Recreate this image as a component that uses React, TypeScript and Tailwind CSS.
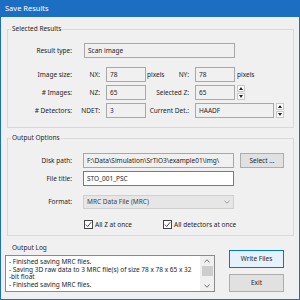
import React from "react";

const font = "font-['Noto_Sans',sans-serif]";

function Field({ w, children, white = false }: { w: string; children?: React.ReactNode; white?: boolean }) {
  return (
    <div
      className={`${w} h-[15px] border ${white ? "bg-white border-[#7a7a7a]" : "bg-[#f0f0f0] border-[#a8a8a8]"} flex items-center px-[3px] text-[#1e1e1e] whitespace-nowrap overflow-hidden`}
    >
      {children}
    </div>
  );
}

function Spin() {
  return (
    <div className="ml-[2px] w-[8px] h-[15px] flex flex-col gap-[1px]">
      <div className="h-[7px] bg-white border border-[#c8c8c8] flex items-center justify-center">
        <svg width="4" height="3" viewBox="0 0 4 3"><path d="M0 3 L2 0 L4 3 Z" fill="#222" /></svg>
      </div>
      <div className="h-[7px] bg-white border border-[#c8c8c8] flex items-center justify-center">
        <svg width="4" height="3" viewBox="0 0 4 3"><path d="M0 0 L2 3 L4 0 Z" fill="#222" /></svg>
      </div>
    </div>
  );
}

function Check() {
  return (
    <div className="w-[9px] h-[9px] border border-[#444] bg-white flex items-center justify-center">
      <svg width="7" height="7" viewBox="0 0 7 7">
        <path d="M0.8 3.6 L2.7 5.5 L6.2 1.2" stroke="#333" strokeWidth="0.9" fill="none" />
      </svg>
    </div>
  );
}

export default function App() {
  return (
    <div className={`w-[300px] h-[300px] bg-[#1b6ec2] px-[1px] pb-[1px] flex flex-col ${font} text-[6.5px] text-[#1e1e1e]`}>
      <div className="h-[17px] flex items-center pl-[4px] text-white text-[7.5px]">Save Results</div>
      <div className="flex-1 bg-[#f0f0f0] flex flex-col">
        {/* Selected Results */}
        <fieldset className="ml-[6px] mt-[7px] w-[287px] border border-[#d9d9d9] pb-[9px]">
          <legend className="ml-[3px] px-[1px] h-[10px] leading-[10px]">Selected Results</legend>
          <div className="mt-[9px] flex items-center h-[15px]">
            <div className="w-[64px] text-right">Result type:</div>
            <div className="ml-[12px]"><Field w="w-[151px]">Scan image</Field></div>
          </div>
          <div className="mt-[9px] flex items-center h-[15px]">
            <div className="w-[64px] text-right">Image size:</div>
            <div className="w-[28px] text-right">NX:</div>
            <div className="ml-[6px]"><Field w="w-[40px]">78</Field></div>
            <div className="w-[43px] flex justify-between pl-[1px]"><span>pixels</span><span>NY:</span></div>
            <div className="ml-[6px]"><Field w="w-[40px]">78</Field></div>
            <div className="ml-[2px]">pixels</div>
          </div>
          <div className="mt-[3px] flex items-center h-[15px]">
            <div className="w-[64px] text-right"># Images:</div>
            <div className="w-[28px] text-right">NZ:</div>
            <div className="ml-[6px]"><Field w="w-[40px]">65</Field></div>
            <div className="w-[43px] text-right whitespace-nowrap">Selected Z:</div>
            <div className="ml-[6px]"><Field w="w-[40px]">65</Field></div>
            <Spin />
          </div>
          <div className="mt-[3px] flex items-center h-[15px]">
            <div className="w-[64px] text-right"># Detectors:</div>
            <div className="w-[28px] text-right">NDET:</div>
            <div className="ml-[6px]"><Field w="w-[40px]">3</Field></div>
            <div className="w-[43px] text-right whitespace-nowrap">Current Det.:</div>
            <div className="ml-[6px]"><Field w="w-[79px]">HAADF</Field></div>
            <Spin />
          </div>
        </fieldset>

        {/* Output Options */}
        <fieldset className="ml-[6px] mt-[5px] w-[287px] border border-[#d9d9d9] pb-[5px]">
          <legend className="ml-[3px] px-[1px] h-[10px] leading-[10px]">Output Options</legend>
          <div className="mt-[10px] flex items-center h-[15px]">
            <div className="w-[64px] text-right">Disk path:</div>
            <div className="ml-[11px]"><Field w="w-[151px]">F:\Data\Simulation\SrTiO3\example01\img\</Field></div>
            <button className="ml-[6px] w-[44px] h-[15px] bg-[#e1e1e1] border border-[#adadad] text-[6.5px]">Select ...</button>
          </div>
          <div className="mt-[3px] flex items-center h-[15px]">
            <div className="w-[64px] text-right">File title:</div>
            <div className="ml-[11px]"><Field w="w-[151px]" white>STO_001_PSC</Field></div>
          </div>
          <div className="mt-[9px] flex items-center h-[14px]">
            <div className="w-[64px] text-right">Format:</div>
            <div className="ml-[11px] w-[151px] h-[14px] bg-[#e6e6e6] border border-[#cfcfcf] flex items-center justify-between pl-[3px] pr-[3px] text-[#444]">
              <span>MRC Data File (MRC)</span>
              <svg width="6" height="4" viewBox="0 0 6 4"><path d="M0.5 0.8 L3 3.2 L5.5 0.8" stroke="#888" strokeWidth="0.8" fill="none" /></svg>
            </div>
          </div>
          <div className="mt-[10px] flex items-center h-[11px]">
            <div className="ml-[76px] flex items-center gap-[2px]"><Check /><span>All Z at once</span></div>
            <div className="ml-[31px] flex items-center gap-[2px]"><Check /><span>All detectors at once</span></div>
          </div>
        </fieldset>

        {/* Output Log */}
        <div className="flex">
          <div className="ml-[4px] flex flex-col">
            <div className="mt-[7px] pl-[7px] h-[10px] leading-[10px]">Output Log</div>
            <div className="mt-[2px] w-[210px] h-[37px] bg-white border border-[#8a8a8a] flex">
              <div className="flex-1 pl-[3px] pt-[2px] leading-[7.6px] overflow-hidden whitespace-nowrap">
                <div>- Finished saving MRC files.</div>
                <div>- Saving 3D raw data to 3 MRC file(s) of size 78 x 78 x 65 x 32</div>
                <div>-bit float</div>
                <div>- Finished saving MRC files.</div>
              </div>
              <div className="w-[14px] bg-[#f0f0f0] flex flex-col items-center">
                <div className="h-[10px] flex items-center justify-center">
                  <svg width="6" height="4" viewBox="0 0 6 4"><path d="M0.5 3.2 L3 0.8 L5.5 3.2" stroke="#606060" strokeWidth="0.9" fill="none" /></svg>
                </div>
                <div className="w-[11px] h-[10px] bg-[#cdcdcd]" />
                <div className="flex-1" />
                <div className="h-[10px] flex items-center justify-center">
                  <svg width="6" height="4" viewBox="0 0 6 4"><path d="M0.5 0.8 L3 3.2 L5.5 0.8" stroke="#606060" strokeWidth="0.9" fill="none" /></svg>
                </div>
              </div>
            </div>
          </div>
          <div className="ml-[14px] flex flex-col">
            <button className="mt-[14px] w-[55px] h-[18px] bg-[#e5f1fb] border border-[#0078d7] text-[6.5px]">Write Files</button>
            <button className="mt-[6px] w-[55px] h-[18px] bg-[#e1e1e1] border border-[#adadad] text-[6.5px]">Exit</button>
          </div>
        </div>
      </div>
    </div>
  );
}
